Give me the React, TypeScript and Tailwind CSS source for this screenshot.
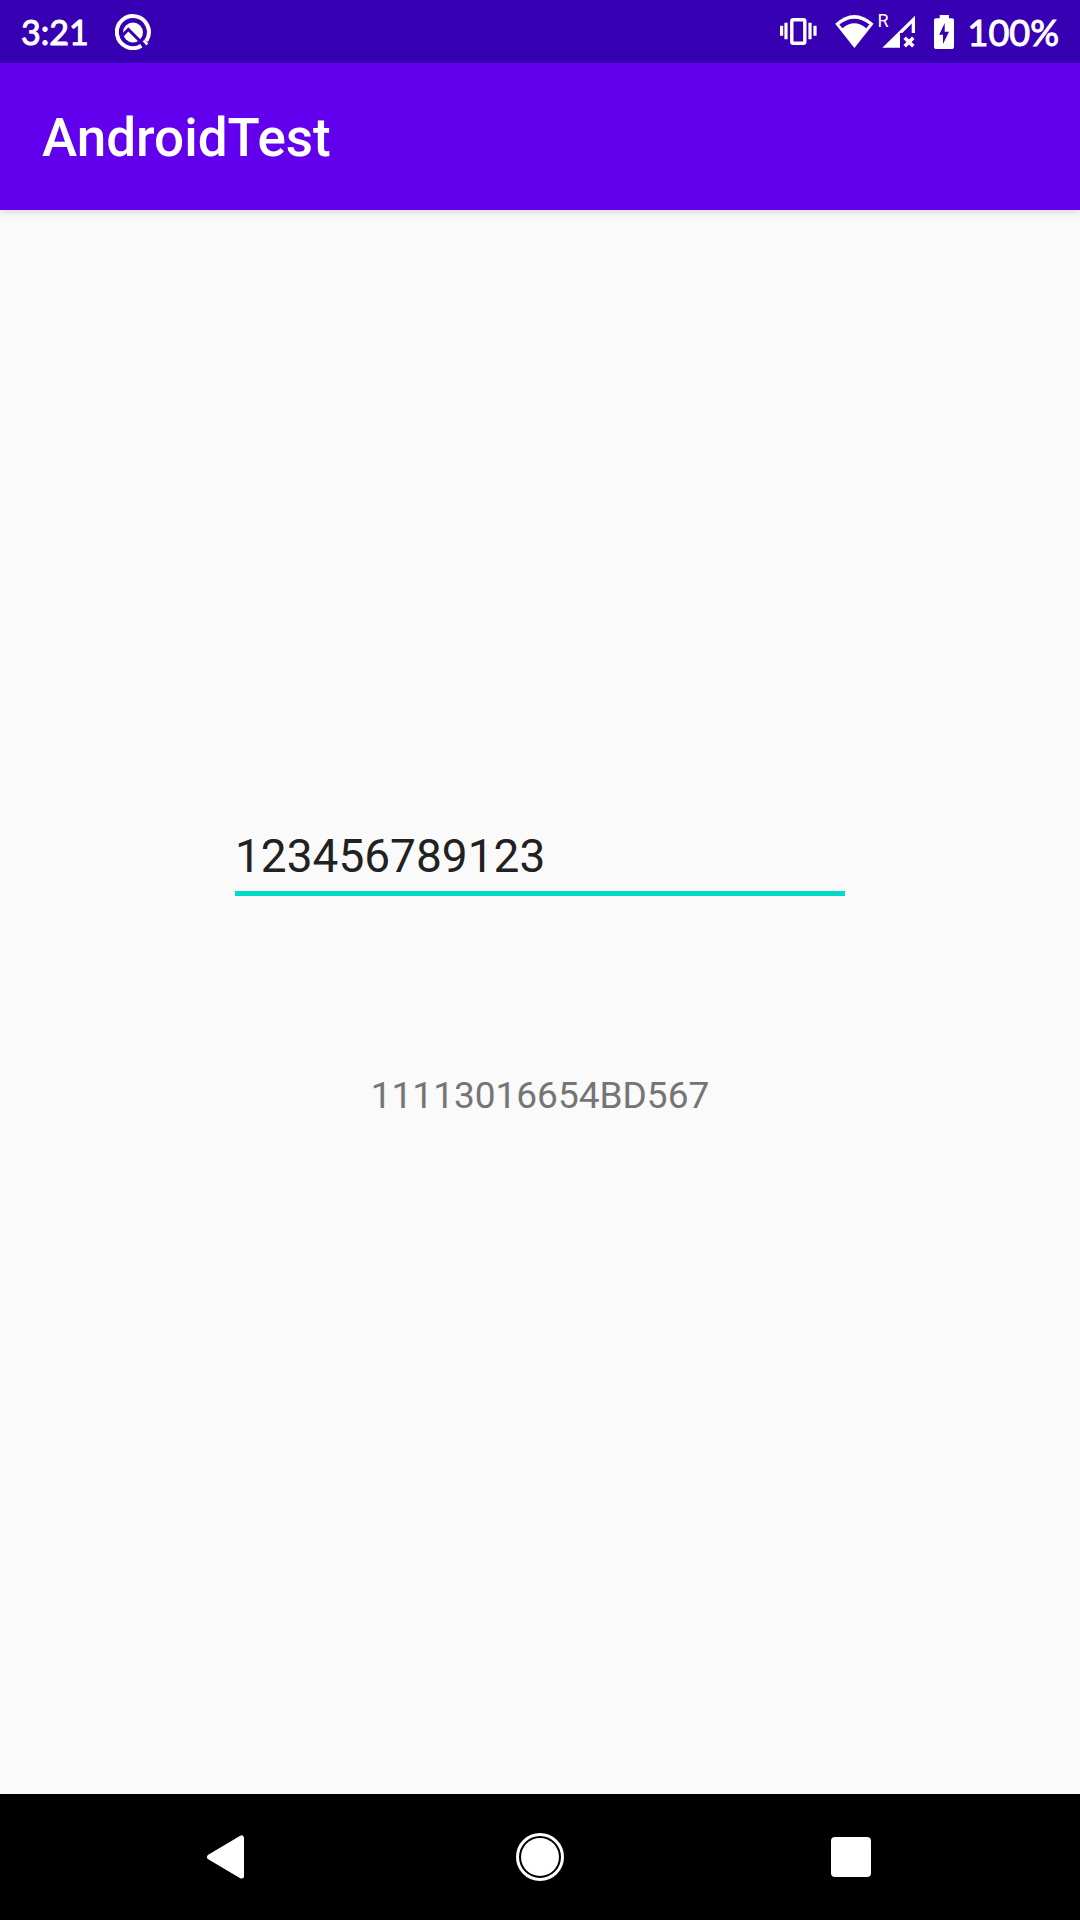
import { useState } from "react";

function LogoIcon() {
  return (
    <svg className="h-9 w-9" viewBox="0 0 36 36" fill="none" aria-hidden="true">
      <path d="M31.3 26.8A16 16 0 1 0 26.3 31.7" stroke="#fff" strokeWidth="4" />
      <path d="M28.6 26.6L32.2 30.6" stroke="#fff" strokeWidth="3" />
      <circle cx="18" cy="18.5" r="10" fill="#fff" />
      <path d="M6.5 22.5L13.3 15.5L29.5 31.5" stroke="#3700b3" strokeWidth="3" />
    </svg>
  );
}

function VibrateIcon() {
  return (
    <svg className="h-7 w-[37px]" viewBox="0 0 37 28" fill="none" aria-hidden="true">
      <rect x="11.8" y="1.7" width="13" height="23.6" rx="1.5" stroke="#fff" strokeWidth="3.4" />
      <path d="M6 4.7V21.3M1.6 7.7V17.7M30 4.7V21.3M35 7.7V17.7" stroke="#fff" strokeWidth="3.2" />
    </svg>
  );
}

function WifiIcon() {
  return (
    <svg className="h-[33px] w-[39px]" viewBox="0 0 39 33" aria-hidden="true">
      <path d="M0.2 8.8Q19.3 -8.8 38.6 8.8L19.4 33Z" fill="#fff" />
      <path d="M4.3 9.6Q19.3 -2.2 34.4 9.6L31.2 13.2Q19.3 3.2 7.4 13.2Z" fill="#3700b3" />
    </svg>
  );
}

function SignalIcon() {
  return (
    <div className="relative h-[33px] w-[34px]">
      <svg className="h-[33px] w-[34px]" viewBox="0 0 34 33" aria-hidden="true">
        <path d="M0.3 32.7L33 0.7V18H29.7V8.5L20.3 18H18V32.7Z" fill="#fff" />
        <path d="M22.7 22.7L31.3 31.3M31.3 22.7L22.7 31.3" stroke="#fff" strokeWidth="3.6" />
      </svg>
      <span className="absolute -top-1.5 -left-1 text-lg leading-6 font-normal">R</span>
    </div>
  );
}

function BatteryIcon() {
  return (
    <svg className="h-[34px] w-5" viewBox="0 0 20 34" aria-hidden="true">
      <path d="M5.7 0H15V3.3H18.2Q20 3.3 20 5.2V32Q20 34 18.2 34H1.8Q0 34 0 32V5.2Q0 3.3 1.8 3.3H5.7Z" fill="#fff" />
      <path d="M10.7 8L5.2 19.7H9V29L15 16.8H10.7Z" fill="#3700b3" />
    </svg>
  );
}

export default function App() {
  const [value, setValue] = useState("123456789123");

  return (
    <div className="flex min-h-screen flex-col bg-[#fafafa] font-['Roboto',sans-serif]">
      <header className="relative text-white shadow-[0_2px_8px_rgba(0,0,0,0.15)]">
        <div className="flex h-[63px] items-center justify-between bg-[#3700b3] px-[21px]">
          <div className="flex items-center gap-[26px]">
            <time className="pt-px font-['Lato',sans-serif] text-[34px] leading-none [-webkit-text-stroke:1px_white]">3:21</time>
            <LogoIcon />
          </div>
          <div className="flex items-center">
            <VibrateIcon />
            <div className="ml-[18px] flex items-center gap-2">
              <WifiIcon />
              <SignalIcon />
            </div>
            <div className="ml-[18px] flex items-center gap-3.5">
              <BatteryIcon />
              <span className="pt-px font-['Lato',sans-serif] text-4xl leading-none [-webkit-text-stroke:1px_white]">100%</span>
            </div>
          </div>
        </div>
        <div className="flex h-[147px] items-center bg-[#6200ee] px-[42px] pt-1">
          <h1 className="text-[53px] leading-none font-medium">AndroidTest</h1>
        </div>
      </header>

      <main className="flex flex-1 flex-col items-center justify-center px-6 pb-[70px]">
        <input
          type="text"
          aria-label="Number"
          value={value}
          onChange={(e) => setValue(e.target.value)}
          className="h-20 w-full max-w-[610px] border-b-[5px] border-[#03dac5] bg-transparent pt-1 text-[46px] text-[#212121] outline-none"
        />
        <output className="mt-[178px] text-[37px] leading-[44px] text-[#757575]">11113016654BD567</output>
      </main>

      <nav className="grid h-[126px] grid-cols-3 bg-black px-[74px]">
        <button type="button" aria-label="Back" className="flex items-center justify-center">
          <svg className="h-12 w-12" viewBox="0 0 48 48" aria-hidden="true">
            <path d="M4.5 24L36.5 5V43Z" fill="#fff" stroke="#fff" strokeWidth="5" strokeLinejoin="round" />
          </svg>
        </button>
        <button type="button" aria-label="Home" className="flex items-center justify-center">
          <svg className="h-12 w-12" viewBox="0 0 48 48" aria-hidden="true">
            <circle cx="24" cy="24" r="22.5" fill="none" stroke="#fff" strokeWidth="3" />
            <circle cx="24" cy="24" r="19" fill="#fff" />
          </svg>
        </button>
        <button type="button" aria-label="Recent apps" className="flex items-center justify-center">
          <span className="h-10 w-10 rounded bg-white" />
        </button>
      </nav>
    </div>
  );
}
